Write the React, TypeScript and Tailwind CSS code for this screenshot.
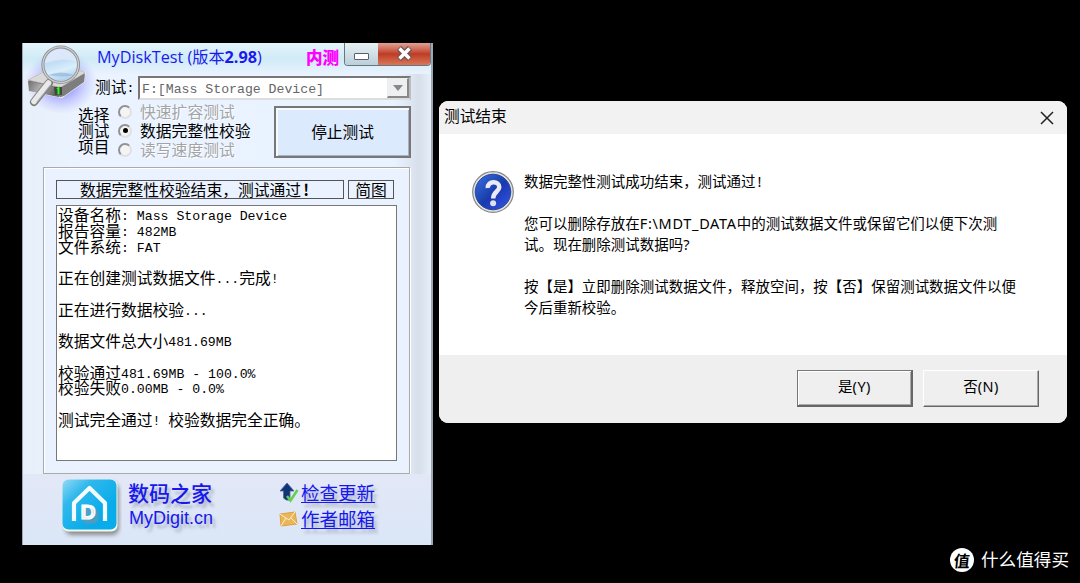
import { Fragment } from "react";

const logLines = [
  "设备名称: Mass Storage Device",
  "报告容量: 482MB",
  "文件系统: FAT",
  "",
  "正在创建测试数据文件...完成!",
  "",
  "正在进行数据校验...",
  "",
  "数据文件总大小481.69MB",
  "",
  "校验通过481.69MB - 100.0%",
  "校验失败0.00MB - 0.0%",
  "",
  "测试完全通过! 校验数据完全正确。",
];

const modes = [
  { label: "快速扩容测试", checked: false },
  { label: "数据完整性校验", checked: true },
  { label: "读写速度测试", checked: false },
];

// Latin runs are set half as wide as the Chinese characters around them
function Mixed({ text }: { text: string }) {
  return (
    <>
      {text.split(/([\x20-\x7e]+)/).map((part, i) =>
        i % 2 ? (
          <span key={i} className="align-[1.5px] font-['Liberation_Mono',monospace] text-[13.2px] leading-none">
            {part}
          </span>
        ) : (
          <Fragment key={i}>{part}</Fragment>
        )
      )}
    </>
  );
}

function DiskIcon() {
  return (
    <svg className="absolute left-0 top-0" width="74" height="72" viewBox="0 0 74 72">
      <defs>
        <radialGradient id="halo">
          <stop offset="0.4" stopColor="#9494ff" stopOpacity="0.8" />
          <stop offset="1" stopColor="#b8b8ff" stopOpacity="0" />
        </radialGradient>
        <linearGradient id="lens" x1="0" y1="0" x2="0.3" y2="1">
          <stop offset="0" stopColor="#d2e2f8" />
          <stop offset="0.5" stopColor="#c3ddf6" />
          <stop offset="0.75" stopColor="#d9effb" />
          <stop offset="1" stopColor="#b2d2f0" />
        </linearGradient>
        <linearGradient id="disk" x1="0" y1="0" x2="1" y2="0.3">
          <stop offset="0" stopColor="#6d6d6d" />
          <stop offset="0.5" stopColor="#b5b5b5" />
          <stop offset="1" stopColor="#666" />
        </linearGradient>
      </defs>
      <ellipse cx="38" cy="39" rx="36" ry="32" fill="url(#halo)" />
      <path d="M5 37 24 27 60 28 62 30 61 39 41 53Q39 55 36 54L6 48Z" fill="#777" stroke="#eee" strokeWidth="1.2" strokeLinejoin="round" />
      <path d="M5 37 24 27 60 28 62 30 40 43Q38 45 35 44Z" fill="#d9d9d9" stroke="#aaa" strokeWidth="0.6" />
      <path d="M5 38 35 45 36 54 6 48Z" fill="url(#disk)" />
      <path d="M37 45 62 31 61 39 41 53 37 54Z" fill="#7d7d7d" />
      <path d="M31 44H39V52H32Z" fill="#3b4a3b" />
      <path d="M34 46 35.5 45V51.5" fill="none" stroke="#38f020" strokeWidth="2" />
      <path d="M26 40 11 59" stroke="#7c7c7c" strokeWidth="8" strokeLinecap="round" />
      <path d="M25.5 40 11 58.5" stroke="#e9e9e9" strokeWidth="5.6" strokeLinecap="round" />
      <path d="M27.5 42 14 59" stroke="#aaa" strokeWidth="1.2" />
      <circle cx="37.7" cy="21.7" r="17.8" fill="url(#lens)" stroke="#8b8d90" strokeWidth="3" />
      <circle cx="37.7" cy="21.7" r="17.8" fill="none" stroke="#cfcfd0" strokeWidth="1.3" />
      <path d="M25 32Q38 27 51 32Q38 35 25 32" fill="#86a9d0" opacity="0.55" />
      <path d="M22 20Q24 7 37.5 6Q51 7 53.5 18Q38 14 22 20" fill="#e9effc" opacity="0.6" />
    </svg>
  );
}

function QuestionIcon() {
  return (
    <svg width="42" height="42" viewBox="0 0 42 42" className="shrink-0">
      <defs>
        <linearGradient id="ball" x1="0" y1="0" x2="1" y2="1">
          <stop offset="0" stopColor="#3d70e0" />
          <stop offset="0.52" stopColor="#173caa" />
          <stop offset="0.56" stopColor="#1d3ab4" />
          <stop offset="1" stopColor="#3358ee" />
        </linearGradient>
      </defs>
      <circle cx="21" cy="21" r="20.3" fill="#e3e3e1" stroke="#858585" strokeWidth="1.2" />
      <circle cx="21" cy="21" r="17.8" fill="url(#ball)" stroke="#28479b" />
      <path d="M15.8 17C15.3 9.5 27.6 9.5 27.3 16.2C27 20.8 21.2 20.5 21.2 27.5" fill="none" stroke="#e9eaf4" strokeWidth="4.5" />
      <circle cx="21.1" cy="32.3" r="3" fill="#dfe1ec" />
    </svg>
  );
}

function HouseLogo() {
  return (
    <svg width="60" height="60" viewBox="0 0 60 60" className="shrink-0">
      <defs>
        <linearGradient id="tile" x1="0" y1="0" x2="0.7" y2="0.7">
          <stop offset="0" stopColor="#94daf5" />
          <stop offset="0.4" stopColor="#30b8ec" />
          <stop offset="1" stopColor="#08acea" />
        </linearGradient>
        <filter id="tileShadow">
          <feGaussianBlur stdDeviation="2" />
        </filter>
      </defs>
      <rect x="3" y="4" width="54" height="52" rx="7" fill="#777" opacity="0.8" filter="url(#tileShadow)" />
      <rect x="0.5" y="0.5" width="55" height="52" rx="6" fill="#f2faee" />
      <rect x="0.5" y="0.5" width="54" height="50" rx="6" fill="url(#tile)" />
      <path d="M12 42V24L27.5 9 43 24V42" fill="none" stroke="#f3fcff" strokeWidth="4.2" strokeLinejoin="round" />
      <text x="18.5" y="40" fontFamily="Liberation Sans, sans-serif" fontSize="21" fontWeight="bold" fill="#fff" stroke="#fff" strokeWidth="1.2">
        D
      </text>
    </svg>
  );
}

function TestWindow() {
  return (
    <div className="relative mt-[43px] h-[502px] w-[411px] shrink-0 border-x border-r-2 border-[#9aa7b6] bg-[linear-gradient(90deg,#e7effa_0%,#eaf3ff_15%,#e9f3ff_91%,#d7dfeb_97%,#e6eef7_100%)]">
      <DiskIcon />
      <div className="flex h-[31px] bg-gradient-to-b from-[#e6f4fc] via-[#cfebf6] to-[#e9f2fe] pl-[74px]">
        <h1 className="w-[209px] pt-[2px] font-['Open_Sans','Noto_Sans_CJK_SC',sans-serif] text-[16.2px] leading-[24px] whitespace-nowrap text-[#1a1af0]">
          MyDiskTest (版本<b>2.98</b>)
        </h1>
        <span className="pt-[2px] text-[16.6px] leading-[24px] font-black whitespace-nowrap text-[#ff00ff]">内测</span>
        <div className="ml-auto flex h-[23px] w-[87px] overflow-hidden rounded-b-[4px] border border-t-0 border-[#69767f]">
          <div className="flex w-[33px] items-center justify-center bg-gradient-to-b from-[#e7f1f5] to-[#bccfda]">
            <span className="mt-[5px] h-[7px] w-[15px] rounded-[1px] border-[1.5px] border-[#58616b] bg-white" />
          </div>
          <div className="flex flex-1 items-center justify-center bg-gradient-to-b from-[#e2a194] via-[#bd3b24] to-[#d87658]">
            <svg width="17" height="15" viewBox="0 0 17 15" className="mb-px">
              <path d="M3 2 14 13M14 2 3 13" stroke="#69575d" strokeWidth="6" />
              <path d="M3.5 2.5 13.5 12.5M13.5 2.5 3.5 12.5" stroke="#fff" strokeWidth="3.4" />
            </svg>
          </div>
        </div>
      </div>

      {/* Drive */}
      <div className="mt-[2px] flex h-[25px] pl-[72px]">
        <span className="w-[43px] text-[15.7px] leading-[22px] whitespace-nowrap">
          <Mixed text="测试:" />
        </span>
        <div className="flex h-[24px] w-[273px] border-2 border-[#777] border-r-[#bbb] border-b-[#ddd] bg-white text-[#666]">
          <span className="flex-1 pl-[2px] text-[15.7px] leading-[19px] whitespace-pre">
            <Mixed text="F:[Mass Storage Device]" />
          </span>
          <span className="flex w-[22px] items-center justify-center border border-r-2 border-b-2 border-[#eee] border-r-[#888] border-b-[#888] bg-[#eeeff0]">
            <svg width="10" height="6">
              <path d="M0 0H10L5 6Z" fill="#888" />
            </svg>
          </span>
        </div>
      </div>

      {/* Mode */}
      <div className="flex h-[66px] pl-[55px]">
        <div className="w-[40px] pt-[6px] text-[15.7px] leading-[16px]">
          选择
          <br />
          测试
          <br />
          项目
        </div>
        <div className="w-[156px] pt-px">
          {modes.map((mode) => (
            <div key={mode.label} className="flex h-[19px] items-center whitespace-nowrap">
              <span className="mr-[8px] flex size-[14px] items-center justify-center rounded-full border-2 border-[#929292] border-r-[#e1e1e1] border-b-[#e1e1e1] bg-[#f4f4f4]">
                {mode.checked && <span className="size-[5px] rounded-full bg-black" />}
              </span>
              <span className={mode.checked ? "text-[15.8px]" : "text-[15.8px] text-[#a2a4a6] [text-shadow:1px_1px_#fff]"}>{mode.label}</span>
            </div>
          ))}
        </div>
        <button className="mt-[5px] h-[52px] w-[137px] border-2 border-[#777] bg-[#dceafd] text-[15.7px] shadow-[inset_2px_2px_#f5faff,inset_-1px_-1px_#a9b2bb]">
          停止测试
        </button>
      </div>

      {/* Result */}
      <section className="ml-[20px] h-[307px] w-[367px] border border-[#aaa] bg-[#eaf2ff] px-[12px] pt-[12px] shadow-[inset_1px_1px_#fff,1px_1px_#fff]">
        <div className="flex gap-[4px] text-[15.8px]">
          <div className="flex h-[19px] w-[288px] items-center border border-[#555] pl-[23px] whitespace-nowrap">
            数据完整性校验结束，测试通过<span className="ml-[2px] font-bold">!</span>
          </div>
          <div className="flex h-[19px] w-[46px] items-center justify-center border border-[#555]">简图</div>
        </div>
        <div className="mt-[6px] h-[256px] w-[341px] border border-[#777] bg-white pt-px pl-[1px] text-[15.75px]">
          {logLines.map((line, i) => (
            <p key={i} className="h-[15.75px] leading-[15.75px] whitespace-pre">
              <Mixed text={line} />
            </p>
          ))}
        </div>
      </section>

      {/* Links */}
      <footer className="flex h-[71px] bg-gradient-to-b from-[#e3e8f7] to-[#dae6f7] pt-[5px] pl-[39px] text-[#1717ef] [text-shadow:3px_4px_3px_#8a91a099]">
        <HouseLogo />
        <div className="ml-[6px] w-[150px]">
          <div className="text-[21px] leading-[27px] font-medium whitespace-nowrap">数码之家</div>
          <div className="mt-px ml-px font-['Liberation_Sans',sans-serif] text-[18px] leading-[22px]">MyDigit.cn</div>
        </div>
        <div>
          <a className="flex h-[26px] items-center text-[18.5px] leading-[26px] whitespace-nowrap">
            <svg width="23" height="24" viewBox="0 0 23 24">
              <path d="M9 3 2 11H5.5V18Q8 21 12 20V11H16Z" fill="#123374" stroke="#4a6aa2" strokeWidth="0.8" />
              <path d="M9 16 12.5 20.5 19.5 10" fill="none" stroke="#62cf51" strokeWidth="2.5" />
            </svg>
            <span className="underline underline-offset-2">检查更新</span>
          </a>
          <a className="flex h-[27px] items-center text-[18.5px] leading-[27px] whitespace-nowrap">
            <svg width="23" height="20" viewBox="0 0 23 20">
              <path d="M2 5 17 3 19 15 3 17Z" fill="#eab65b" stroke="#dfa142" />
              <path d="M2 5 11 11 17 3M3 17 8 9M19 15 13 9" fill="none" stroke="#fff0c3" />
            </svg>
            <span className="underline underline-offset-2">作者邮箱</span>
          </a>
        </div>
      </footer>
    </div>
  );
}

function ResultDialog() {
  return (
    <div className="mt-[101px] ml-[6px] flex h-[322px] w-[628px] shrink-0 flex-col overflow-hidden rounded-[9px] bg-white font-['Noto_Sans','Noto_Sans_CJK_SC',sans-serif]">
      <header className="flex h-[33px] items-center justify-between bg-[#f2f2f2] pr-[13px] pl-[5px] text-[15.7px]">
        <span className="pb-[2px]">测试结束</span>
        <svg width="14" height="14" viewBox="0 0 14 14">
          <path d="M1 1 13 13M13 1 1 13" stroke="#222" strokeWidth="1.5" />
        </svg>
      </header>
      <div className="flex h-[221px] pt-[37px] pl-[33px]">
        <QuestionIcon />
        <div className="ml-[10px] text-[14.48px] leading-[21px] whitespace-nowrap">
          <p>
            数据完整性测试成功结束，测试通过<span className="ml-[2px]">!</span>
          </p>
          <p className="mt-[21px]">
            您可以删除存放在<span className="tracking-[0.7px]">F:\MDT_DATA</span>中的测试数据文件或保留它们以便下次测
            <br />
            试。现在删除测试数据吗?
          </p>
          <p className="mt-[21px]">
            按【是】立即删除测试数据文件，释放空间，按【否】保留测试数据文件以便
            <br />
            今后重新校验。
          </p>
        </div>
      </div>
      <footer className="flex flex-1 justify-end gap-[10px] bg-[#efefef] pt-[15px] pr-[28px] text-[14.5px]">
        <button className="h-[37px] w-[116px] border border-r-2 border-b-2 border-[#777] border-r-[#666] border-b-[#666] pb-[2px] shadow-[inset_1px_1px_#fff,inset_-1px_-1px_#aaa]">
          是<span className="tracking-[0.5px]">(Y)</span>
        </button>
        <button className="h-[37px] w-[116px] border border-white border-r-[#666] border-b-[#666] pb-[3px] shadow-[inset_-1px_-1px_#aaa]">
          否<span className="tracking-[0.5px]">(N)</span>
        </button>
      </footer>
    </div>
  );
}

export default function App() {
  return (
    <main className="relative flex h-[583px] w-[1080px] items-start overflow-hidden bg-black pl-[22px] font-['Noto_Sans_CJK_SC',sans-serif] text-black">
      <TestWindow />
      <ResultDialog />
      <div className="absolute right-[11px] bottom-[11px] flex h-[24px] items-center gap-[7px] text-[17.6px] whitespace-nowrap text-white">
        <span className="flex size-[24px] items-center justify-center rounded-full bg-white text-[16px] font-bold text-black">
          <span className="-skew-x-6">值</span>
        </span>
        <span className="mb-[2px]">什么值得买</span>
      </div>
    </main>
  );
}
